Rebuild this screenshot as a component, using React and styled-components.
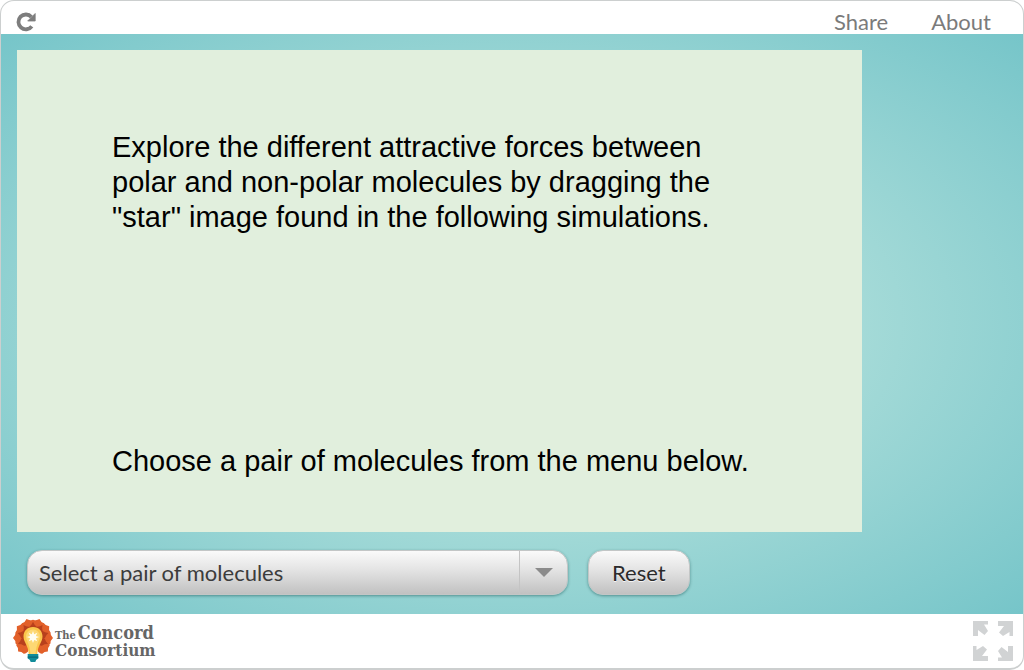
import React from "react";
import styled, { createGlobalStyle } from "styled-components";

const GlobalStyle = createGlobalStyle`
  * { box-sizing: border-box; }
  html, body, #root { height: 100%; }
  body {
    margin: 0;
    background: #fff;
    font-family: Lato, "Liberation Sans", sans-serif;
  }
`;

const Frame = styled.div`
  display: flex;
  flex-direction: column;
  min-height: 100%;
  border: 1px solid #cccfcf;
  border-width: 1px 1px 2px 1px;
  border-radius: 14px;
  overflow: hidden;
  background: #fff;
`;

const TopBar = styled.header`
  display: flex;
  align-items: center;
  justify-content: space-between;
  height: 33px;
  padding: 8px 32px 0 14px;
`;

const IconButton = styled.button`
  display: flex;
  padding: 0;
  border: 0;
  background: none;
  cursor: pointer;
`;

const Nav = styled.nav`
  display: flex;
  gap: 43px;
`;

const NavLink = styled.a`
  color: #7b7b7b;
  font-size: 22px;
  line-height: 26px;
  text-decoration: none;
`;

const Stage = styled.main`
  flex: 1;
  padding: 16px;
  background: radial-gradient(ellipse farthest-corner at center, #cfeee5, #76c5c9);
`;

const Panel = styled.section`
  display: flex;
  flex-direction: column;
  justify-content: space-between;
  min-height: 482px;
  margin-right: 145px;
  padding: 80px 95px 53px;
  background: #e1efdd;
`;

const Message = styled.p`
  max-width: 640px;
  margin: 0;
  color: #000;
  font-family: "Liberation Sans", Arial, sans-serif;
  font-size: 29px;
  line-height: 35px;
`;

const Controls = styled.form`
  display: flex;
  gap: 20px;
  padding: 18px 10px 2px;
`;

const glossy = `
  height: 45px;
  border: 1px solid #c3c6c6;
  border-radius: 15px;
  background: linear-gradient(#fafafa, #e3e3e3 45%, #c1c1c1);
  box-shadow: 0 1px 3px rgba(0, 60, 60, 0.45);
  font-family: inherit;
  font-size: 22px;
  cursor: pointer;
`;

const SelectBox = styled.label`
  position: relative;
  width: 541px;
`;

const Select = styled.select`
  ${glossy}
  width: 100%;
  padding: 0 60px 0 11px;
  appearance: none;
  color: #3c3c3c;
`;

const SelectArrow = styled.span`
  position: absolute;
  top: 1px;
  right: 1px;
  bottom: 1px;
  display: flex;
  align-items: center;
  justify-content: center;
  width: 48px;
  border-left: 1px solid #c4c4c4;
  pointer-events: none;

  &::after {
    content: "";
    border: 9px solid transparent;
    border-top-color: #8b8b8b;
    border-bottom: 0;
  }
`;

const ResetButton = styled.button`
  ${glossy}
  padding: 0 23px;
  color: #2b2b2b;
  text-shadow: 0 1px 0 #f5f5f5;
`;

const BottomBar = styled.footer`
  display: flex;
  align-items: center;
  justify-content: space-between;
  height: 54px;
  padding: 0 10px 0 11px;
`;

const Brand = styled.a`
  display: flex;
  align-items: center;
  gap: 1px;
  color: #666;
  text-decoration: none;
`;

const BrandName = styled.span`
  display: flex;
  flex-direction: column;
  font-family: "DejaVu Serif Condensed", "DejaVu Serif", serif;
  font-size: 17px;
  font-weight: 700;
  line-height: 15px;
`;

const BrandLead = styled.span`
  display: flex;
  align-items: baseline;
  gap: 2px;
  font-size: 18px;
`;

const BrandThe = styled.small`
  font-size: 11px;
`;

function ReloadIcon() {
  return (
    <svg width="22" height="22" viewBox="0 0 22 22" aria-hidden="true">
      <path d="M16.800 15.300A7.400 7.400 0 1 1 16.400 6" fill="none" stroke="#7d7d7d" strokeWidth="3.800" />
      <path d="M20.200 2.500v7.500h-7.500z" fill="#7d7d7d" stroke="#7d7d7d" strokeWidth=".8" strokeLinejoin="round" />
    </svg>
  );
}

const OUTER_PETALS = [-132, -90, -54, -19, 19, 54, 90, 132];
const INNER_PETALS = [-112, -72, -36, 0, 36, 72, 112];

function BulbLogo() {
  return (
    <svg width="42" height="46" viewBox="0 0 42 46" aria-hidden="true">
      {OUTER_PETALS.map((angle) => (
        <path
          key={angle}
          transform={`rotate(${angle} 21 20)`}
          d="M21 20L14.200 7Q14 3.500 15.500 2.500 18.500 2.800 21 0 23.500 2.800 26.500 2.500 28 3.500 27.800 7z"
          fill="#e2602a"
        />
      ))}
      {INNER_PETALS.map((angle) => (
        <path
          key={angle}
          transform={`rotate(${angle} 21 20)`}
          d="M21 20Q15 12 17.500 8.500 19.500 7.500 21 3.800 22.500 7.500 24.500 8.500 27 12 21 20z"
          fill="#b8401d"
        />
      ))}
      <path d="M21 9c-5.800 0-9.500 4.200-9.500 9.300 0 6.200 5 9.200 5.200 17.700h8.600c.2-8.500 5.200-11.500 5.200-17.700C30.500 13.200 26.800 9 21 9z" fill="#fbc54b" />
      <path d="M21 11.500a7 7 0 0 0-7 7c0 4 3.500 6 4.500 17.500h5C24.500 24.500 28 22.500 28 18.500a7 7 0 0 0-7-7z" fill="#fdd873" />
      <path d="M21 13l1.200 3.200 3.100-1.400-1.400 3.100 3.200 1.100-3.200 1.200 1.400 3-3.100-1.300L21 25l-1.200-3.100-3.100 1.300 1.400-3-3.200-1.200 3.200-1.100-1.400-3.100 3.100 1.400z" fill="#fffdf0" />
      <path d="M15.700 36h10.600v4.500l-2 1.200-1 2.300h-4.600l-1-2.300-2-1.200z" fill="#128c9a" />
      <path d="M15.700 38.500h10.600v1.300H15.700z" fill="#0b6976" />
    </svg>
  );
}

function FullscreenIcon() {
  return (
    <svg width="40" height="40" viewBox="0 0 40 40" fill="#d1d3d4" aria-hidden="true">
      {[0, 90, 180, 270].map((angle) => (
        <path key={angle} transform={`rotate(${angle} 20 20)`} d="M0 0h15v3.500h-4l4 6.500-3.500 4-6.500-5v6H0z" />
      ))}
    </svg>
  );
}

export default function App() {
  return (
    <>
      <GlobalStyle />
      <Frame>
        <TopBar>
          <IconButton type="button" aria-label="Reload">
            <ReloadIcon />
          </IconButton>
          <Nav>
            <NavLink href="#share">Share</NavLink>
            <NavLink href="#about">About</NavLink>
          </Nav>
        </TopBar>
        <Stage>
          <Panel>
            <Message>
              Explore the different attractive forces between polar and non-polar molecules by dragging the "star" image
              found in the following simulations.
            </Message>
            <Message>Choose a pair of molecules from the menu below.</Message>
          </Panel>
          <Controls>
            <SelectBox>
              <Select aria-label="Pair of molecules">
                <option>Select a pair of molecules</option>
              </Select>
              <SelectArrow />
            </SelectBox>
            <ResetButton type="reset">Reset</ResetButton>
          </Controls>
        </Stage>
        <BottomBar>
          <Brand href="#concord">
            <BulbLogo />
            <BrandName>
              <BrandLead>
                <BrandThe>The</BrandThe>
                <span>Concord</span>
              </BrandLead>
              <span>Consortium</span>
            </BrandName>
          </Brand>
          <IconButton type="button" aria-label="Full screen">
            <FullscreenIcon />
          </IconButton>
        </BottomBar>
      </Frame>
    </>
  );
}
